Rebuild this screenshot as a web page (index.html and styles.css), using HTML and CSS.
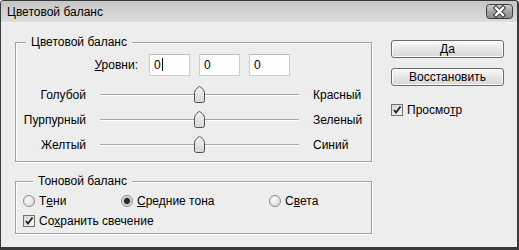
FILE: index.html
```html
<!DOCTYPE html>
<html lang="ru">
<head>
    <meta charset="UTF-8">
    <title>Цветовой баланс</title>
    <link rel="stylesheet" href="styles.css">
</head>
<body>
    <div class="dialog">
        <div class="titlebar">
            <span class="title">Цветовой баланс</span>
            <span class="close">
                <svg width="27" height="15" viewBox="0 0 27 15">
                    <defs>
                        <linearGradient id="cg" x1="0" y1="0" x2="0" y2="1">
                            <stop offset="0" stop-color="#d2d2d2"/>
                            <stop offset="0.5" stop-color="#a4a4a4"/>
                            <stop offset="1" stop-color="#8c8c8c"/>
                        </linearGradient>
                    </defs>
                    <rect x="0.5" y="0.5" width="26" height="14" rx="3" fill="url(#cg)" stroke="#3a3a3a"/>
                    <path d="M10 4 L17 11 M17 4 L10 11" stroke="#3c3c3c" stroke-width="4.5" stroke-linecap="square"/>
                    <path d="M10 4 L17 11 M17 4 L10 11" stroke="#fff" stroke-width="2.4" stroke-linecap="square"/>
                </svg>
            </span>
        </div>

        <div class="content">
            <div class="main">
                <!-- Цветовой баланс -->
                <fieldset class="group color-group">
                    <legend>Цветовой баланс</legend>
                    <div class="levels">
                        <span class="levels-label"><u>У</u>ровни:</span>
                        <div class="level-input">0<span class="caret"></span></div>
                        <div class="level-input">0</div>
                        <div class="level-input">0</div>
                    </div>
                    <div class="slider-row first">
                        <span class="slider-left">Голубой</span>
                        <div class="slider"><span class="thumb"></span></div>
                        <span class="slider-right">Красный</span>
                    </div>
                    <div class="slider-row">
                        <span class="slider-left">Пурпурный</span>
                        <div class="slider"><span class="thumb"></span></div>
                        <span class="slider-right">Зеленый</span>
                    </div>
                    <div class="slider-row">
                        <span class="slider-left">Желтый</span>
                        <div class="slider"><span class="thumb"></span></div>
                        <span class="slider-right">Синий</span>
                    </div>
                </fieldset>

                <!-- Тоновой баланс -->
                <fieldset class="group tone-group">
                    <legend>Тоновой баланс</legend>
                    <div class="tone-options">
                        <label class="option"><span class="radio"></span>Т<u>е</u>ни</label>
                        <label class="option"><span class="radio checked"></span><u>С</u>редние тона</label>
                        <label class="option"><span class="radio"></span>С<u>в</u>ета</label>
                    </div>
                    <label class="option keep"><span class="checkbox checked"></span>Со<u>х</u>ранить свечение</label>
                </fieldset>
            </div>

            <div class="side">
                <button class="btn">Да</button>
                <button class="btn">Восстановить</button>
                <label class="option preview"><span class="checkbox checked"></span>Просмо<u>т</u>р</label>
            </div>
        </div>
    </div>
</body>
</html>
```

FILE: styles.css
```css
body {
    margin: 0;
    font-family: "Liberation Sans", Arial, sans-serif;
    font-size: 12px;
    color: #000;
    background: #fff;
}

.dialog {
    width: 519px;
    height: 250px;
    box-sizing: border-box;
    border: 1px solid #3a3a3a;
    border-right-width: 2px;
    border-bottom-width: 3px;
    border-radius: 4px 4px 0 0;
    background: #ededed;
    display: flex;
    flex-direction: column;
}

.titlebar {
    height: 22px;
    box-sizing: border-box;
    display: flex;
    align-items: center;
    justify-content: space-between;
    padding: 0 4px 0 6px;
    background: linear-gradient(#c6c6c6, #dcdcdc);
    border-bottom: 1px solid #f2f2f2;
    border-radius: 3px 3px 0 0;
}

.close {
    display: flex;
    width: 27px;
    height: 15px;
}

.content {
    display: flex;
    padding: 12px 0 0 14px;
}

.main {
    width: 357px;
}

/* Групповые рамки */
.group {
    margin: 0;
    padding: 0;
    min-width: 0;
    border: 1px solid #a2a2a2;
    box-shadow: 1px 1px 0 #fff, inset 1px 1px 0 #fff;
}

.group legend {
    margin-left: 10px;
    padding: 0 5px;
    line-height: 14px;
    background: #ededed;
}

.color-group {
    padding-bottom: 4px;
}

.levels {
    display: flex;
    align-items: center;
    margin-top: 5px;
}

.levels-label {
    width: 122px;
    margin-right: 11px;
    text-align: right;
}

.level-input {
    width: 41px;
    height: 22px;
    box-sizing: border-box;
    margin-right: 9px;
    padding-left: 4px;
    border: 1px solid #cdcdcd;
    border-top-color: #bdbdbd;
    background: #fff;
    line-height: 20px;
}

.caret {
    display: inline-block;
    width: 1px;
    height: 13px;
    margin-left: 1px;
    vertical-align: -2px;
    background: #000;
}

.slider-row {
    display: grid;
    grid-template-columns: 70px 199px auto;
    column-gap: 14px;
    align-items: center;
    height: 25px;
}

.slider-row.first {
    margin-top: 6px;
}

.slider-left {
    text-align: right;
}

.slider {
    position: relative;
    height: 0;
    border-top: 1px solid #a8a8a8;
    border-bottom: 1px solid #fff;
}

.thumb {
    position: absolute;
    left: 93px;
    top: -10px;
    width: 13px;
    height: 18px;
    background: url("data:image/svg+xml,%3Csvg xmlns='http://www.w3.org/2000/svg' width='13' height='18'%3E%3Cdefs%3E%3ClinearGradient id='g' x1='0' y1='0' x2='0' y2='1'%3E%3Cstop offset='0' stop-color='%23f4f4f4'/%3E%3Cstop offset='1' stop-color='%23d6d6d6'/%3E%3C/linearGradient%3E%3C/defs%3E%3Cpath d='M1.5 15.5 V7.5 Q1.5 6 3 4.5 L5.3 2 Q6.5 0.8 7.7 2 L10 4.5 Q11.5 6 11.5 7.5 V15.5 Q11.5 17.5 9.5 17.5 H3.5 Q1.5 17.5 1.5 15.5 Z' fill='url(%23g)' stroke='%23505050'/%3E%3C/svg%3E") no-repeat;
}

.tone-group {
    margin-top: 12px;
    padding: 0 0 4px 7px;
}

.tone-options {
    display: grid;
    grid-template-columns: 98px 148px auto;
    margin-top: 5px;
}

.option {
    display: flex;
    align-items: center;
    height: 16px;
    white-space: nowrap;
}

.keep {
    margin-top: 4px;
}

.radio {
    width: 12px;
    height: 12px;
    box-sizing: border-box;
    margin-right: 4px;
    border: 1px solid #8a8a8a;
    border-radius: 50%;
    background: radial-gradient(circle at 40% 35%, #fbfbfb, #d4d4d4);
}

.radio.checked {
    background: radial-gradient(circle, #2a2a2a 0 2.6px, #9a9a9a 3.2px, #e4e4e4 4px, #d0d0d0);
}

.checkbox {
    width: 12px;
    height: 12px;
    box-sizing: border-box;
    margin-right: 4px;
    border: 1px solid #707070;
    background: linear-gradient(135deg, #d6d6d6, #f6f6f6);
}

.checkbox.checked {
    background: url("data:image/svg+xml,%3Csvg xmlns='http://www.w3.org/2000/svg' width='10' height='10'%3E%3Cpath d='M2 5 L4 7.5 L8.5 1.5' fill='none' stroke='%23202020' stroke-width='1.8'/%3E%3C/svg%3E") no-repeat center, linear-gradient(135deg, #d6d6d6, #f6f6f6);
}

/* Правая колонка */
.side {
    display: flex;
    flex-direction: column;
    width: 113px;
    margin-left: 19px;
    padding-top: 5px;
}

.btn {
    height: 18px;
    padding: 0;
    border: 1px solid #6a6a6a;
    border-radius: 3px;
    background: linear-gradient(#fafafa, #e6e6e6 50%, #d8d8d8);
    box-shadow: inset 0 0 0 1px #fdfdfd;
    font-family: inherit;
    font-size: 12px;
    color: #000;
    line-height: 16px;
}

.btn + .btn {
    margin-top: 10px;
}

.preview {
    margin-top: 16px;
}
```
